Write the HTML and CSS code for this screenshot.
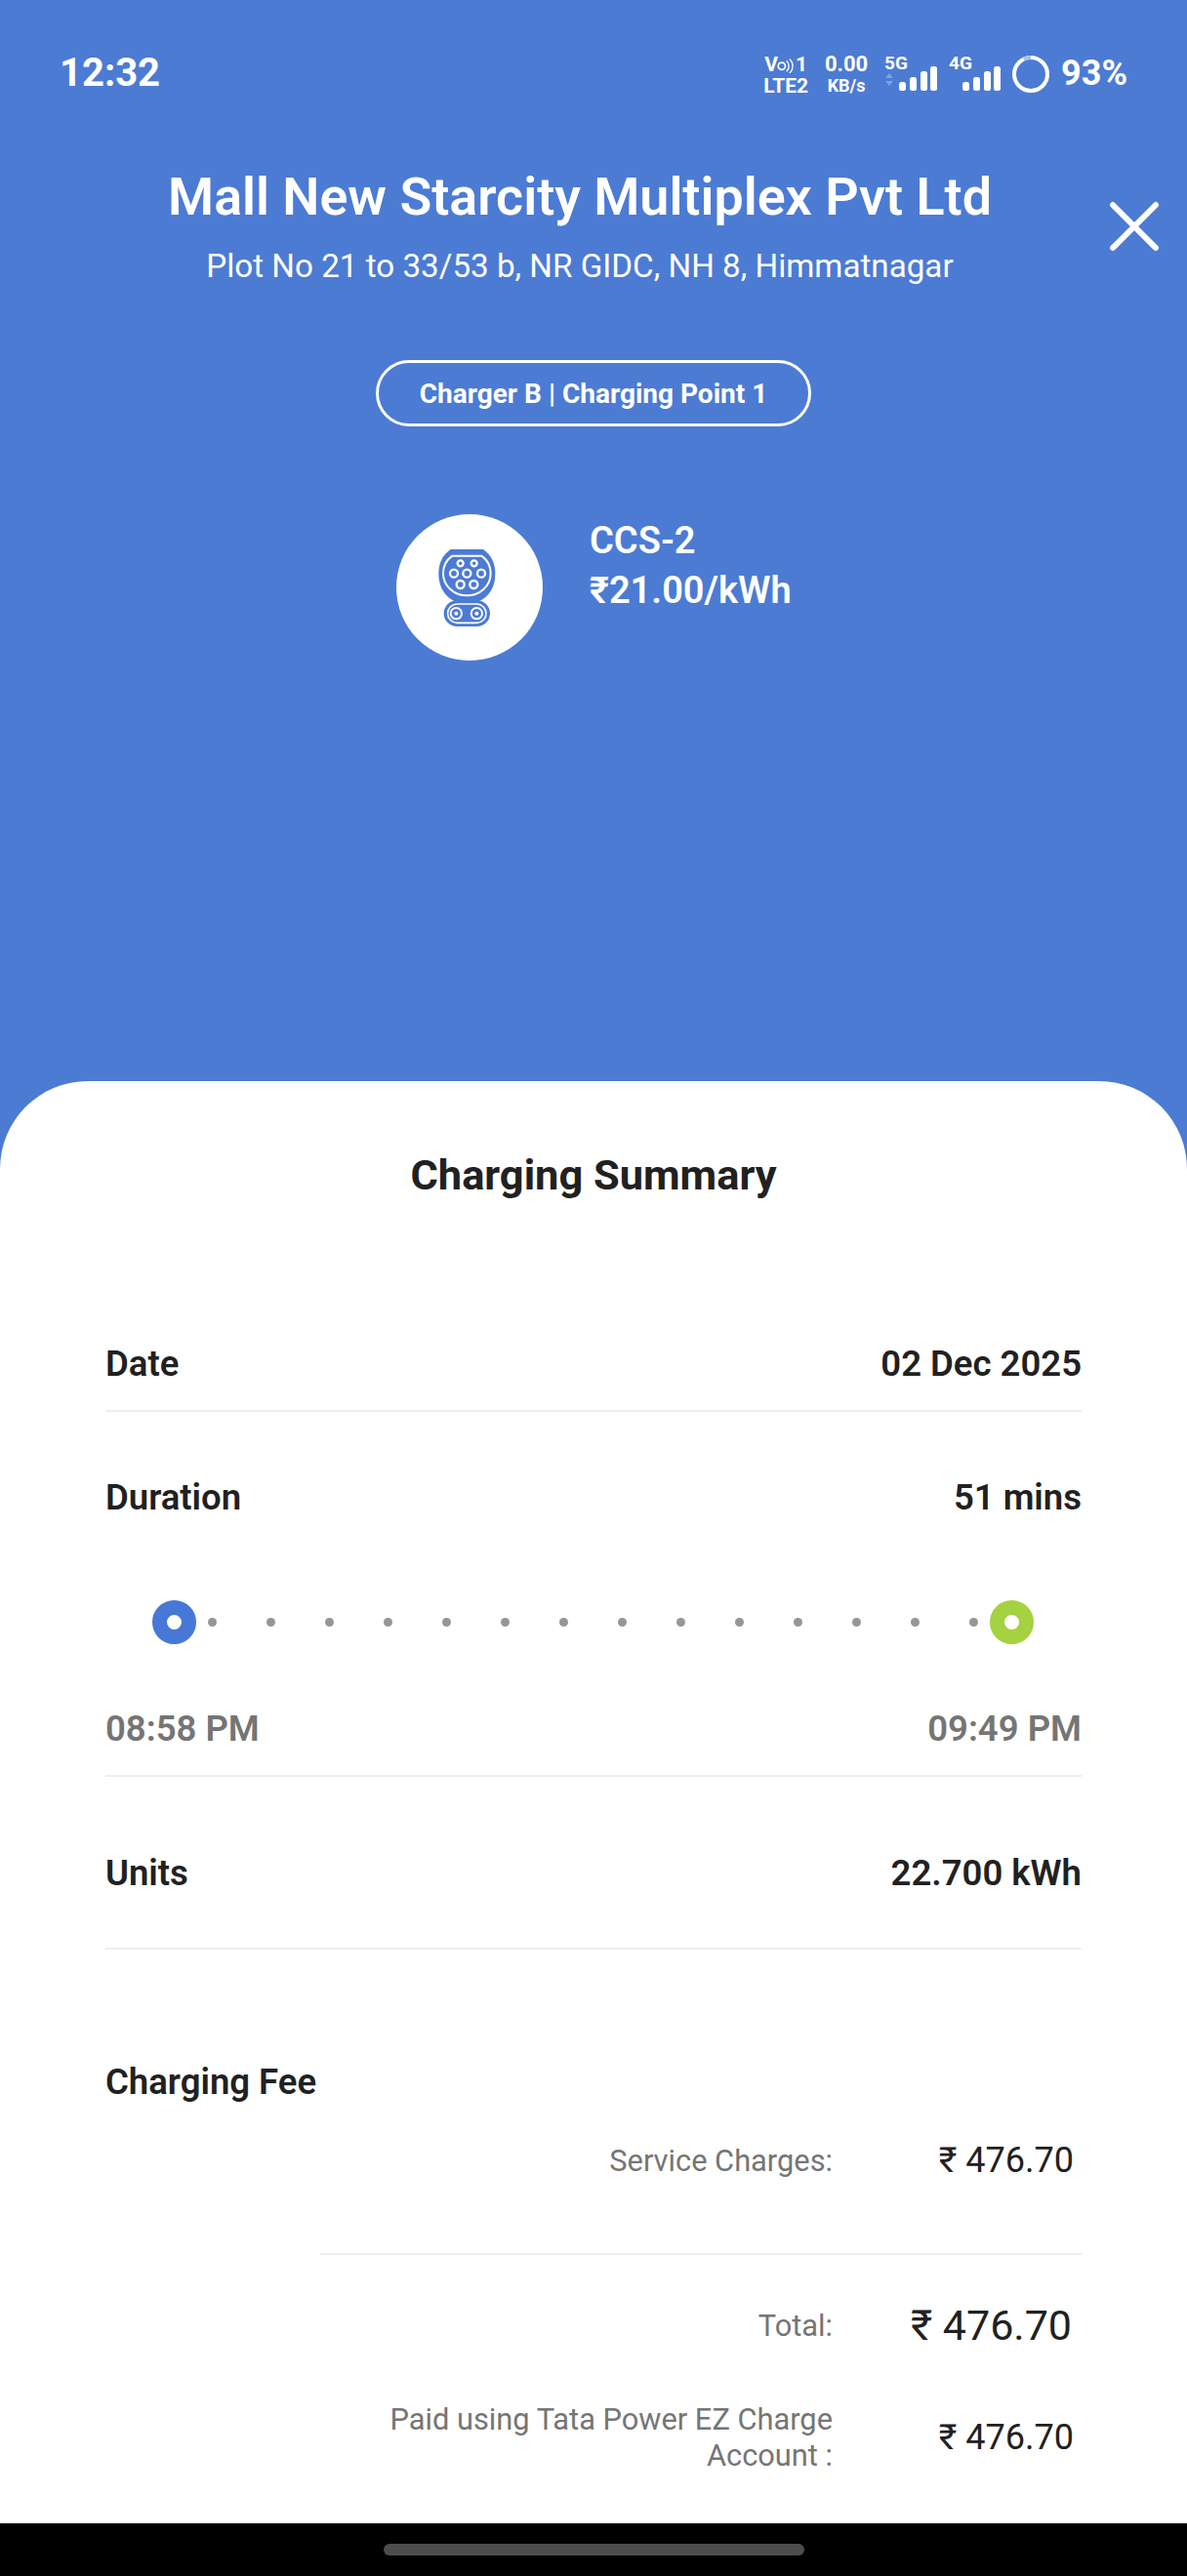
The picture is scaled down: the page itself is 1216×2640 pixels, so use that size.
FILE: index.html
```html
<!DOCTYPE html>
<html lang="en">
<head>
<meta charset="utf-8">
<title>Charging Summary</title>
<link rel="stylesheet" href="styles.css">
</head>
<body>
<div class="screen">
  <header class="hero">
    <div class="status">
      <span class="clock">12:32</span>
      <div class="sys">
        <div class="stack volte"><span class="vo">V<svg class="waves" viewBox="0 0 14 14" width="17" height="17"><circle cx="4" cy="8" r="3" fill="none" stroke="#fff" stroke-width="1.4"/><path d="M8 3.5a6 6 0 0 1 0 9M10.5 2a8 8 0 0 1 0 12" fill="none" stroke="#fff" stroke-width="1.1"/></svg>1</span><span>LTE2</span></div>
        <div class="stack speed"><span class="speed-num">0.00</span><span>KB/s</span></div>
        <div class="net net-5g">
          <span class="net-label">5G</span>
          <svg class="bars" viewBox="0 0 56 26" width="56" height="26"><path d="M1 12l4-5 4 5zM1 15h8l-4 5z" fill="#7fa2e2"/><rect x="15" y="16" width="7" height="9" rx="2.5" fill="#fff"/><rect x="26" y="11" width="7" height="14" rx="2.5" fill="#fff"/><rect x="37" y="5" width="7" height="20" rx="2.5" fill="#fff"/><rect x="47" y="0" width="7" height="25" rx="2.5" fill="#fff"/></svg>
        </div>
        <div class="net net-4g">
          <span class="net-label">4G</span>
          <svg class="bars" viewBox="0 0 56 26" width="56" height="26"><rect x="15" y="16" width="7" height="9" rx="2.5" fill="#fff"/><rect x="26" y="11" width="7" height="14" rx="2.5" fill="#fff"/><rect x="37" y="5" width="7" height="20" rx="2.5" fill="#fff"/><rect x="47" y="0" width="7" height="25" rx="2.5" fill="#fff"/></svg>
        </div>
        <svg class="battery" viewBox="0 0 38 38" width="38" height="38"><circle cx="19" cy="19" r="17" fill="none" stroke="#fff" stroke-width="4"/><circle cx="19" cy="19" r="17" fill="none" stroke="#a9c1ec" stroke-width="4" stroke-dasharray="7.5 100" transform="rotate(-115 19 19)"/></svg>
        <span class="pct">93%</span>
      </div>
    </div>
    <h1 class="title">Mall New Starcity Multiplex Pvt Ltd</h1>
    <p class="address">Plot No 21 to 33/53 b, NR GIDC, NH 8, Himmatnagar</p>
    <div class="pill">Charger B | Charging Point 1</div>
    <div class="connector">
      <div class="plug">
        <svg viewBox="78 80 450 450" width="150" height="150">
          <path d="M245 188h100q37 26 37 74q0 62-52 87h-70q-52-25-52-87q0-48 37-74z" fill="#4c7bd4"/>
          <rect x="224" y="345" width="142" height="80" rx="40" fill="#4c7bd4"/>
          <path d="M250 208h90q28 20 28 54a73 68 0 0 1-146 0q0-34 28-54z" fill="none" stroke="#fff" stroke-width="6"/>
          <g fill="none" stroke="#fff" stroke-width="7">
            <circle cx="275" cy="231" r="9"/><circle cx="317" cy="231" r="9"/>
            <circle cx="255" cy="262" r="12"/><circle cx="295" cy="262" r="12"/><circle cx="339" cy="262" r="12"/>
            <circle cx="275" cy="296" r="12"/><circle cx="316" cy="296" r="12"/>
            <rect x="236" y="356" width="118" height="58" rx="29" stroke-width="5"/>
          </g>
          <circle cx="262" cy="385" r="23" fill="#4c7bd4"/><circle cx="325" cy="385" r="23" fill="#4c7bd4"/>
          <g fill="none" stroke="#fff">
            <circle cx="262" cy="385" r="17" stroke-width="6"/><circle cx="325" cy="385" r="17" stroke-width="6"/>
          </g>
          <circle cx="262" cy="385" r="6" fill="#fff"/><circle cx="325" cy="385" r="6" fill="#fff"/>
        </svg>
      </div>
      <div class="conn-text"><div>CCS-2</div><div>₹21.00/kWh</div></div>
    </div>
    <svg class="close" viewBox="0 0 52 52" width="52" height="52"><path d="M4 4l44 44M48 4L4 48" stroke="#fff" stroke-width="6" stroke-linecap="round"/></svg>
  </header>

  <main class="sheet">
    <h2 class="sheet-title">Charging Summary</h2>
    <div class="row row-date"><span>Date</span><span>02 Dec 2025</span></div>
    <div class="row row-duration"><span>Duration</span><span>51 mins</span></div>
    <div class="timeline">
      <span class="node node-start"></span>
      <div class="dots">
        <i></i><i></i><i></i><i></i><i></i><i></i><i></i><i></i><i></i><i></i><i></i><i></i><i></i><i></i>
      </div>
      <span class="node node-end"></span>
    </div>
    <div class="row row-times"><span>08:58 PM</span><span>09:49 PM</span></div>
    <div class="row row-units"><span>Units</span><span>22.700 kWh</span></div>
    <div class="row row-fee"><span>Charging Fee</span></div>
    <div class="fee fee-service"><span class="fee-label">Service Charges:</span><span class="fee-value">₹ 476.70</span></div>
    <div class="fee-rule"></div>
    <div class="fee fee-total"><span class="fee-label">Total:</span><span class="fee-value">₹ 476.70</span></div>
    <div class="fee fee-paid"><span class="fee-label">Paid using Tata Power EZ Charge Account :</span><span class="fee-value">₹ 476.70</span></div>
  </main>

  <footer class="navbar"><span class="handle"></span></footer>
</div>
</body>
</html>
```
FILE: styles.css
```css
* { box-sizing: border-box; }
html, body { margin: 0; padding: 0; }
body { background: #000; font-family: Roboto, "Noto Sans", sans-serif; }
.screen { width: 1216px; height: 2640px; display: flex; flex-direction: column; overflow: hidden; background: #4c7bd4; }

.hero { position: relative; height: 1108px; flex: none; color: #fff; text-align: center; }
.status { height: 74px; display: flex; justify-content: space-between; padding: 55px 61px 0; }
.clock { font-size: 40px; font-weight: 700; line-height: 40px; }
.sys { display: flex; align-items: flex-start; font-weight: 700; }
.stack { display: flex; flex-direction: column; align-items: center; font-size: 21px; line-height: 22px; }
.volte { width: 48px; }
.vo { display: flex; align-items: center; font-size: 21px; }
.waves { margin: 0 2px 0 -1px; }
.speed { width: 44px; margin-left: 16px; font-size: 18px; }
.speed-num { font-size: 22px; }
.net { position: relative; width: 56px; height: 42px; }
.net-5g { margin-left: 17px; }
.net-4g { margin-left: 9px; }
.net-label { position: absolute; left: 0; top: 0; font-size: 19px; line-height: 20px; }
.net-4g .net-label { left: 1px; }
.bars { position: absolute; left: 0; top: 13px; }
.battery { margin: 0 0 0 10px; position: relative; top: 2px; }
.pct { font-size: 36px; line-height: 40px; margin-left: 12px; position: relative; top: 0; }

.title { margin: 0; padding: 97px 28px 0 0; font-size: 53.8px; line-height: 62px; font-weight: 600; }
.address { margin: 20px 0 0; padding-right: 28px; font-size: 33.2px; line-height: 40px; font-weight: 400; }
.pill { width: 446px; height: 68px; margin: 76px auto 0; border: 3px solid #fff; border-radius: 34px; font-size: 28px; line-height: 64px; font-weight: 700; }
.connector { display: flex; margin: 90px 0 0 406px; text-align: left; }
.plug { width: 150px; height: 150px; border-radius: 50%; background: #fff; flex: none; }
.conn-text { margin: 2px 0 0 48px; font-size: 38px; line-height: 51px; font-weight: 600; }
.close { position: absolute; left: 1136px; top: 206px; }

.sheet { flex: 1; background: #fff; border-radius: 90px 90px 0 0; padding: 67px 108px 0; color: #212121; }
.sheet-title { margin: 0; height: 60px; font-size: 43.4px; line-height: 60px; font-weight: 700; text-align: center; }
.row { display: flex; justify-content: space-between; font-size: 36.5px; line-height: 60px; font-weight: 600; }
.row-date { margin-top: 115px; height: 97px; padding-top: 18px; border-bottom: 2px solid #eee; }
.row-duration { margin-top: 58px; height: 60px; }
.timeline { display: flex; align-items: center; margin: 74px 48px 0; height: 46px; }
.node { width: 45px; height: 45px; flex: none; border-radius: 50%; border: 15px solid #4878d6; background: #fff; }
.node-end { border-color: #a5d240; margin-left: 12px; }
.dots { display: flex; gap: 51px; margin-left: 12px; }
.dots i { width: 9px; height: 9px; border-radius: 50%; background: #969696; }
.row-times { margin-top: 57px; height: 79px; padding-bottom: 17px; border-bottom: 2px solid #eee; color: #757575; }
.row-units { margin-top: 69px; height: 108px; border-bottom: 2px solid #eee; }
.row-fee { margin-top: 106px; height: 60px; }
.fee { display: flex; justify-content: flex-end; align-items: center; padding-right: 8px; }
.fee-label { width: 500px; flex: none; font-size: 30.8px; line-height: 37px; font-weight: 440; color: #757575; text-align: right; }
.fee-value { width: 247px; flex: none; font-size: 36px; font-weight: 430; text-align: right; }
.fee-service { margin-top: 30px; height: 40px; }
.fee-rule { height: 2px; margin: 75px 0 0 220px; background: #eee; }
.fee-total { margin-top: 52px; height: 40px; padding-right: 10px; }
.fee-total .fee-value { width: 245px; font-size: 43px; }
.fee-paid { margin-top: 58px; height: 74px; }
.navbar { height: 54px; flex: none; background: #000; display: flex; justify-content: center; padding-top: 21px; }
.handle { width: 431px; height: 12px; border-radius: 6px; background: #4d4d4d; }
```
